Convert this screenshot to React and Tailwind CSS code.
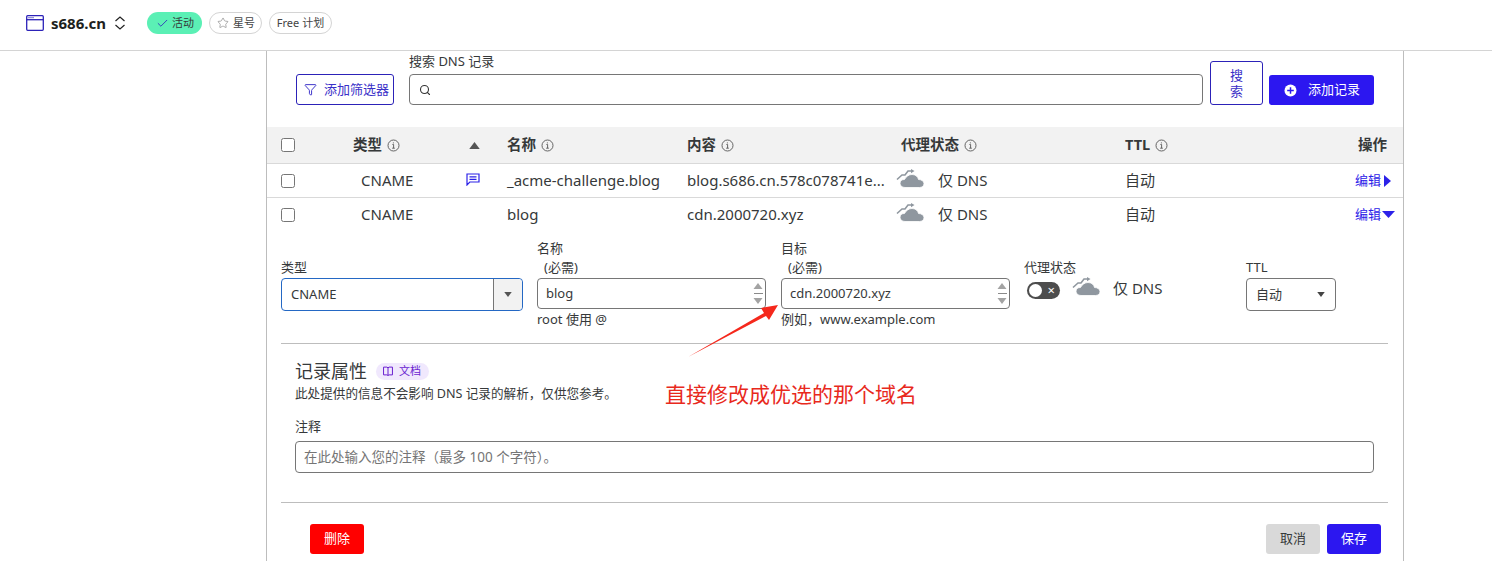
import { Check, Star, Funnel, Search } from 'lucide-react'

const FONT = 'font-["Noto_Sans","Noto_Sans_CJK_SC",sans-serif]'

function InfoIcon() {
  return (
    <svg width="13" height="13" viewBox="0 0 13 13" fill="none" className="shrink-0 text-[#555]">
      <circle cx="6.5" cy="6.5" r="5.5" stroke="currentColor" strokeWidth="0.9" />
      <path d="M5.4 5.5h1.2v3.6M5.2 9.2h2.6M6.4 3.4v1" stroke="currentColor" strokeWidth="0.9" />
    </svg>
  )
}

function HeadCell({ label, info = true, className = '' }) {
  return (
    <div className={`flex items-center gap-[5px] text-[14.5px] font-bold text-[#36393a] ${className}`}>
      <span>{label}</span>
      {info && <InfoIcon />}
    </div>
  )
}

// dns-only cloud with the little arrow over it
function DnsCloud({ className = '' }) {
  return (
    <svg width="28" height="20" viewBox="0 0 28 20" className={className}>
      <path d="M1 10.500 6 6h3l3-4h3.500" fill="none" stroke="#8f979f" strokeWidth="1.600" />
      <path d="M15 0l3.500 2L15 4.200z" fill="#8f979f" />
      <path d="M9 18.500c-3 0-5-1.800-5-4.200 0-2.300 2-4 4.500-3.800C10 7.500 13 5.500 16 5.500c3.500 0 6 2.300 6.500 5 3 0 5.500 1.700 5.500 4.200 0 2.200-2 3.800-4.500 3.800z" fill="#8f979f" stroke="#fff" strokeWidth="0.800" />
    </svg>
  )
}

function Spinner() {
  return (
    <div className="flex flex-col items-center w-[12px] shrink-0 mr-[1px]">
      <svg width="10" height="8" viewBox="0 0 10 8"><path d="M5 1 9.500 7H.5z" fill="#a3a3a3" /></svg>
      <div className="w-[9px] h-px bg-[#8a8a8a] my-[3px]" />
      <svg width="10" height="8" viewBox="0 0 10 8"><path d="M5 7 .5 1h9z" fill="#a3a3a3" /></svg>
    </div>
  )
}

function Caret({ className = '' }) {
  return (
    <svg width="8" height="5" viewBox="0 0 9 6" className={className}>
      <path d="M0 0h9L4.500 6z" fill="currentColor" />
    </svg>
  )
}

function Row({ name, content, comment, open }) {
  return (
    <div className={`grid grid-cols-[80px_99px_47px_180px_209px_229px_1fr] items-center h-[34px] pl-[14px] text-[15px] text-[#36393a] ${open ? 'pb-[1px]' : 'border-b border-[#d9d9d9]'}`}>
      <input type="checkbox" readOnly className="w-[14px] h-[14px]" />
      <span>CNAME</span>
      <span className="pl-[6px] -mt-[3px]">
        {comment && (
          <svg width="14" height="13" viewBox="0 0 14 13" fill="none" stroke="#2c22e8" strokeWidth="1.200">
            <path d="M1 1h12v8H3.800L1 12zM3.500 3.800h7M3.500 6.300h7" />
          </svg>
        )}
      </span>
      <span>{name}</span>
      <span>{content}</span>
      <div className="flex items-center gap-[14px]">
        <DnsCloud className="-mt-[4px]" />
        <span>仅 DNS</span>
      </div>
      <div className="flex items-center justify-between">
        <span>自动</span>
        <span className="flex items-center text-[13px] text-[#2c22e8] pr-[8px]">
          编辑
          {open ? (
            <svg width="13" height="7" viewBox="0 0 13 7" className="ml-px"><path d="M0 0h13L6.500 7z" fill="#2c22e8" /></svg>
          ) : (
            <svg width="7" height="12" viewBox="0 0 7 12" className="ml-[3px] mr-[4px]"><path d="M0 0l7 6-7 6z" fill="#2c22e8" /></svg>
          )}
        </span>
      </div>
    </div>
  )
}

function SpinInput({ value, width }) {
  return (
    <div className={`flex items-center h-[31px] border border-[#767676] rounded-[4px] pl-[8px] ${width}`}>
      <input readOnly value={value} className="flex-1 min-w-0 pt-[1px] text-[13px] text-[#36393a] outline-none bg-transparent" />
      <Spinner />
    </div>
  )
}

export default function App() {
  return (
    <div className={`relative h-[561px] overflow-hidden bg-white ${FONT}`}>
      <header className="flex items-center h-[51px] border-b border-[#d4d4d4] pl-[26px] pb-[4px]">
        <svg width="18" height="16" viewBox="0 0 18 16" fill="none" stroke="#2c22b8" strokeWidth="1.300">
          <rect x="0.700" y="0.700" width="16.600" height="14.600" rx="1" />
          <path d="M.7 4.700h16.600" />
          <path d="M2.500 2.700h1M4.500 2.700h1M6.500 2.700h1" />
        </svg>
        <span className="ml-[7px] text-[15px] font-bold text-[#1d1f20]">s686.cn</span>
        <svg width="12" height="14" viewBox="0 0 12 14" fill="none" stroke="#222" strokeWidth="1.200" className="ml-[8px]">
          <path d="M1.500 5 6 1l4.500 4M1.500 9 6 13l4.500-4" />
        </svg>
        <div className="ml-[21px] flex items-center h-[22px] w-[55px] rounded-full bg-[#5bf0b5] pl-[9px] text-[11px] text-[#36393a]">
          <Check size={13} strokeWidth={1.500} className="text-[#2c22b8] mr-[3px]" />
          活动
        </div>
        <div className="ml-[7px] flex items-center h-[22px] w-[53px] rounded-full border border-[#d4d4d4] pl-[7px] text-[11px] text-[#444]">
          <Star size={12} strokeWidth={1.200} className="text-[#777] mr-[4px]" />
          星号
        </div>
        <div className="ml-[7px] flex items-center justify-center h-[22px] w-[63px] rounded-full border border-[#d4d4d4] text-[11px] text-[#444]">
          Free 计划
        </div>
      </header>

      <main className="ml-[266px] w-[1138px] h-[510px] border-x border-[#bdbdbd]">
        <div className="flex items-end h-[54px] pl-[29px]">
          <button className="flex items-center h-[31px] w-[98px] border border-[#2c22b8] rounded-[3px] pl-[7px] text-[13px] text-[#3a30c8]">
            <Funnel size={13} strokeWidth={1.800} className="mr-[7px]" />
            添加筛选器
          </button>
          <div className="ml-[15px] w-[794px]">
            <div className="text-[13px] leading-[25px] text-[#36393a]">搜索 DNS 记录</div>
            <div className="flex items-center h-[31px] border border-[#767676] rounded-[4px] pl-[9px]">
              <Search size={12} strokeWidth={2.200} className="text-[#333]" />
            </div>
          </div>
          <button className="ml-[7px] w-[53px] h-[44px] border border-[#2c22b8] rounded-[3px] text-[13px] leading-[16px] text-[#3a30c8]">
            搜
            <br />
            索
          </button>
          <button className="ml-[6px] flex items-center h-[30px] w-[105px] rounded-[3px] bg-[#2c17f0] pl-[15px] text-[13px] text-white">
            <svg width="13" height="13" viewBox="0 0 13 13" className="mr-[11px]">
              <circle cx="6.500" cy="6.500" r="6" fill="#fff" />
              <path d="M6.500 3.200v6.600M3.200 6.500h6.600" stroke="#2c17f0" strokeWidth="1.500" />
            </svg>
            添加记录
          </button>
        </div>

        <div className="grid grid-cols-[72px_115px_39px_180px_214px_224px_1fr] items-center h-[37px] mt-[22px] bg-[#f2f2f2] border-b border-[#d9d9d9] pl-[14px]">
          <input type="checkbox" readOnly className="w-[14px] h-[14px]" />
          <HeadCell label="类型" />
          <Caret className="text-[#555] w-[13px] h-[7px] rotate-180" />
          <HeadCell label="名称" />
          <HeadCell label="内容" />
          <HeadCell label="代理状态" />
          <div className="flex items-center justify-between pr-[16px]">
            <HeadCell label="TTL" />
            <HeadCell label="操作" info={false} />
          </div>
        </div>
        <Row name="_acme-challenge.blog" content="blog.s686.cn.578c078741e..." comment />
        <Row name="blog" content="cdn.2000720.xyz" open />

        <div className="flex items-start pl-[14px] pt-[7px] text-[13px] text-[#36393a]">
          <div className="w-[256px] pt-[19px]">
            <div className="leading-[19px] mb-[1px]">类型</div>
            <div className="flex items-stretch h-[33px] w-[242px] border border-[#2468c4] rounded-[4px]">
              <span className="flex-1 flex items-center pl-[9px] text-[13px]">CNAME</span>
              <span className="flex items-center justify-center w-[29px] bg-[#f2f2f2] border-l border-[#767676] rounded-r-[4px]">
                <Caret className="text-[#555]" />
              </span>
            </div>
          </div>
          <div className="w-[244px]">
            <div className="leading-[19px]">名称</div>
            <div className="leading-[19px] mb-[1px] pl-[7px]">(必需)</div>
            <SpinInput value="blog" width="w-[229px]" />
            <div className="leading-[20px]">root 使用 @</div>
          </div>
          <div className="w-[243px]">
            <div className="leading-[19px]">目标</div>
            <div className="leading-[19px] mb-[1px] pl-[7px]">(必需)</div>
            <SpinInput value="cdn.2000720.xyz" width="w-[229px]" />
            <div className="leading-[20px]">例如，www.example.com</div>
          </div>
          <div className="w-[222px] pt-[19px]">
            <div className="leading-[19px] mb-[1px]">代理状态</div>
            <div className="flex items-center pl-[3px]">
              <span className="flex items-center justify-between w-[33px] h-[17px] rounded-full bg-[#4d4d4d] px-[2px] mt-[4px]">
                <span className="w-[13px] h-[13px] rounded-full bg-white" />
                <span className="text-[13px] leading-none text-white pr-[3px]">×</span>
              </span>
              <DnsCloud className="ml-[12px] -mt-[4px]" />
              <span className="ml-[13px] text-[15px] -mt-[1px]">仅 DNS</span>
            </div>
          </div>
          <div className="pt-[19px]">
            <div className="leading-[19px] mb-[1px]">TTL</div>
            <div className="flex items-center justify-between w-[90px] h-[33px] border border-[#767676] rounded-[4px] pl-[9px] pr-[10px] text-[13px]">
              自动
              <Caret className="text-[#444]" />
            </div>
          </div>
        </div>

        <div className="mx-[14px] w-[1107px] border-t border-[#bdbdbd] mt-[14px]" />

        <div className="pl-[28px] pt-[14px] text-[#36393a]">
          <div className="flex items-center h-[26px]">
            <span className="text-[18px]">记录属性</span>
            <span className="ml-[9px] flex items-center h-[17px] w-[53px] rounded-full bg-[#f0e8fd] pl-[7px] text-[11px] text-[#6a1fd0]">
              <svg width="10" height="10" viewBox="0 0 9 9" fill="none" stroke="#6a1fd0" strokeWidth="0.900" className="mr-[6px]">
                <path d="M.5 1h3l1 .6L5.500 1h3v7h-3l-1 .5-1-.5h-3zM4.500 1.600v6.900" />
              </svg>
              文档
            </span>
          </div>
          <div className="text-[12.6px] leading-[20px]">此处提供的信息不会影响 DNS 记录的解析，仅供您参考。</div>
          <div className="text-[13px] leading-[20px] mt-[12px]">注释</div>
          <div className="flex items-center h-[32px] w-[1079px] mt-[5px] border border-[#767676] rounded-[4px] pl-[8px] text-[13.5px] text-[#757575]">
            在此处输入您的注释（最多 100 个字符）。
          </div>
        </div>

        <div className="mx-[14px] w-[1107px] border-t border-[#bdbdbd] mt-[29px]" />

        <div className="flex items-center justify-between pl-[43px] pr-[22px] mt-[21px] text-[13px]">
          <button className="h-[30px] w-[54px] rounded-[3px] bg-[#ff0000] text-white">删除</button>
          <div className="flex gap-[7px]">
            <button className="h-[30px] w-[54px] rounded-[3px] bg-[#d9d9d9] text-[#36393a]">取消</button>
            <button className="h-[30px] w-[54px] rounded-[3px] bg-[#2c17f0] text-white">保存</button>
          </div>
        </div>
      </main>

      {/* annotation drawn over the screenshot */}
      <svg width="110" height="70" viewBox="0 0 110 70" className="absolute left-[680px] top-[297px]">
        <path d="M8 60 84 16l-3-5 17-3-9 15-3-4z" fill="#f5281c" />
      </svg>
      <div className="absolute left-[665px] top-[379px] text-[21px] leading-[30px] text-[#e8291c]">
        直接修改成优选的那个域名
      </div>
    </div>
  )
}
